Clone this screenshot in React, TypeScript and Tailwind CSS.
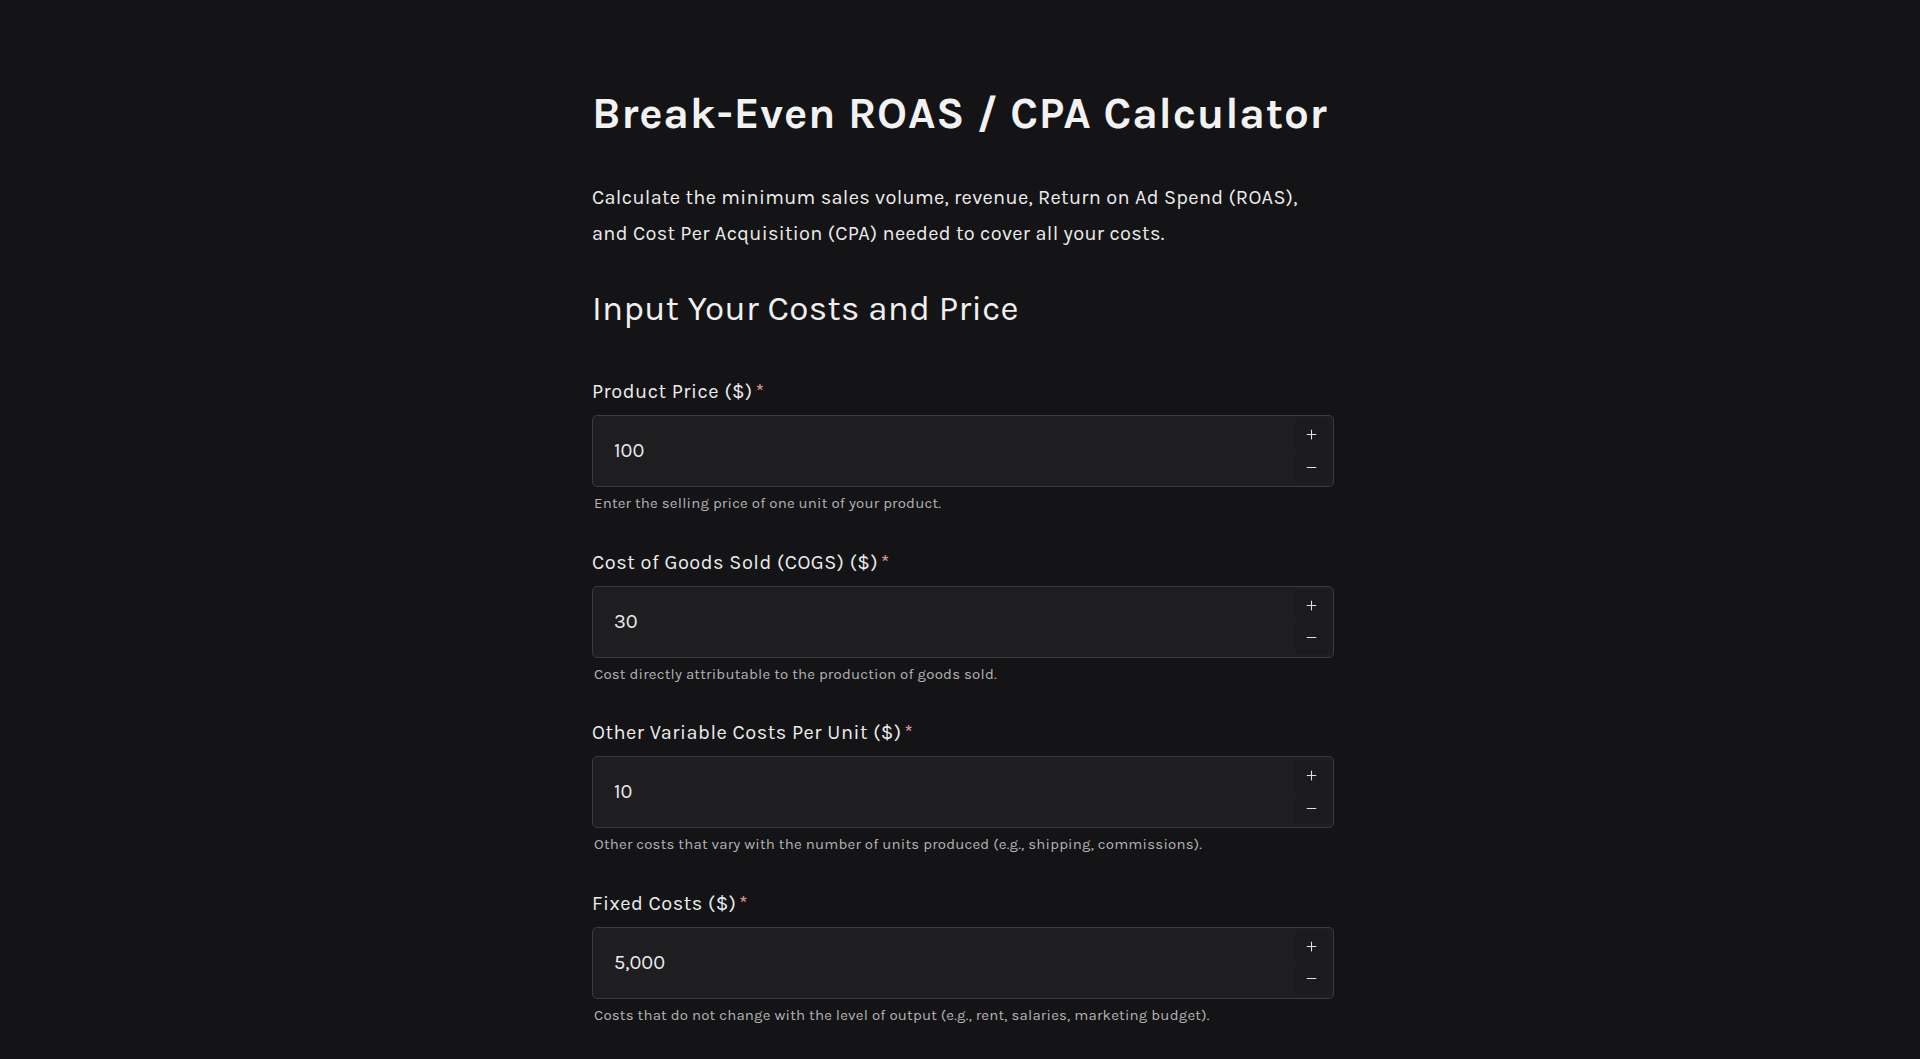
import { Plus, Minus } from 'lucide-react';

interface Field {
  label: string;
  value: string;
  help: string;
}

const fields: Field[] = [
  { label: 'Product Price ($)', value: '100', help: 'Enter the selling price of one unit of your product.' },
  { label: 'Cost of Goods Sold (COGS) ($)', value: '30', help: 'Cost directly attributable to the production of goods sold.' },
  { label: 'Other Variable Costs Per Unit ($)', value: '10', help: 'Other costs that vary with the number of units produced (e.g., shipping, commissions).' },
  { label: 'Fixed Costs ($)', value: '5,000', help: 'Costs that do not change with the level of output (e.g., rent, salaries, marketing budget).' },
];

function NumberField({ field }: { field: Field }) {
  return (
    <div className="flex flex-col">
      <label className="text-[20px] leading-[24px] font-normal text-[#ececec] tracking-[0.5px]">
        {field.label}
        <span className="ml-[3px] text-[#e9a3a3]">*</span>
      </label>
      <div className="mt-[11px] flex h-[72px] items-stretch rounded-[5px] border border-[#3b3b3e] bg-[#1e1e21]">
        <input
          readOnly
          value={field.value}
          className="min-w-0 flex-1 bg-transparent pl-[21px] text-[20px] text-[#ececec] outline-none"
        />
        <div className="mr-[2px] flex w-[36px] flex-col py-[3px] pr-[3px]">
          <button className="flex flex-1 items-center justify-center bg-[#1b1b1e] text-[#e0e0e0]">
            <Plus className="h-[15px] w-[15px]" strokeWidth={1.7} />
          </button>
          <button className="mt-[1px] flex flex-1 items-center justify-center bg-[#1b1b1e] text-[#e0e0e0]">
            <Minus className="h-[15px] w-[15px]" strokeWidth={1.7} />
          </button>
        </div>
      </div>
      <p className="mt-[6px] pl-[2px] text-[15px] leading-[20px] text-[#b3b3b5] tracking-[0.2px]">{field.help}</p>
    </div>
  );
}

export default function App() {
  return (
    <div className="min-h-screen bg-[#141416] font-['Karla','Inter',sans-serif]">
      <div className="mx-auto w-[748px] pl-[6px] pt-[89px] pb-[40px]">
        <h1 className="text-[44px] leading-[50px] font-bold text-[#f2f2f2] tracking-[0.75px]">
          Break-Even ROAS / CPA Calculator
        </h1>
        <p className="mt-[41px] text-[20px] leading-[36px] text-[#ececec] tracking-[0.3px]">
          Calculate the minimum sales volume, revenue, Return on Ad Spend (ROAS), and Cost Per Acquisition (CPA) needed to cover all your costs.
        </p>
        <h2 className="mt-[37px] text-[35px] leading-[40px] font-normal text-[#f0f0f0] tracking-[0.3px]">
          Input Your Costs and Price
        </h2>
        <div className="mt-[51px] flex flex-col gap-[37.5px]">
          {fields.map((f) => (
            <NumberField key={f.label} field={f} />
          ))}
        </div>
      </div>
    </div>
  );
}
